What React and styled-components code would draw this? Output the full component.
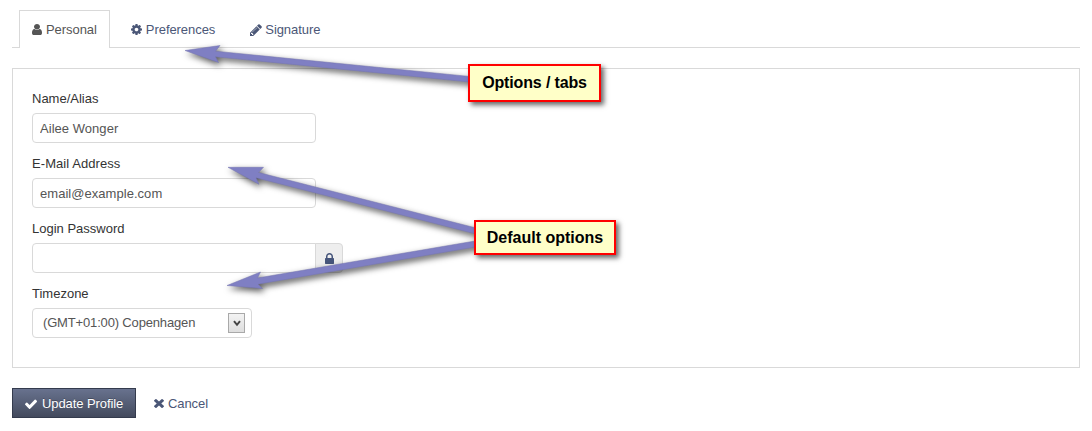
import React from 'react';
import styled, { createGlobalStyle } from 'styled-components';

const Global = createGlobalStyle`
  * { box-sizing: border-box; }
  body {
    margin: 0;
    background: #fff;
    color: #333;
    font: 13px/20px "Liberation Sans", Arial, sans-serif;
  }
  input, button { font: inherit; }
`;

const Page = styled.main`
  position: relative;
  height: 431px;
  padding: 10px 12px 0;
  overflow: hidden;
`;

const Tabs = styled.nav`
  display: flex;
  height: 38px;
  padding-left: 7px;
  border-bottom: 1px solid #d9d9d9;
`;

const Tab = styled.a`
  display: flex;
  align-items: center;
  height: 38px;
  padding: 0 12px;
  margin-right: ${(p) => p.$gap || 0}px;
  border: 1px solid ${(p) => (p.$active ? '#d9d9d9' : 'transparent')};
  border-bottom: 0;
  background: ${(p) => (p.$active ? '#fff' : 'transparent')};
  color: ${(p) => (p.$active ? '#555' : '#4b5777')};
  letter-spacing: -0.06px;
`;

const Glyph = styled.svg`
  flex: none;
  display: block;
  width: ${(p) => p.$w}px;
  height: ${(p) => p.$h}px;
  margin-right: ${(p) => p.$space ?? 4}px;
  fill: currentColor;
`;

const Panel = styled.section`
  height: 300px;
  margin-top: 20px;
  padding: 20px 19px 0;
  border: 1px solid #d9d9d9;
`;

const Field = styled.div`
  height: 65px;
`;

const Label = styled.label`
  display: block;
  height: 24px;
  color: #333;
  letter-spacing: ${(p) => p.$track || 0}px;
`;

const InputRow = styled.div`
  display: flex;
`;

const Input = styled.input`
  display: block;
  width: 284px;
  height: 30px;
  padding: 0 7px;
  border: 1px solid #d9d9d9;
  border-radius: ${(p) => (p.$joined ? '4px 0 0 4px' : '4px')};
  background: #fff;
  color: #555;
  outline: 0;
  letter-spacing: 0.04px;
`;

const AddOn = styled.span`
  display: flex;
  align-items: center;
  justify-content: center;
  width: 28px;
  height: 30px;
  margin-left: -1px;
  border: 1px solid #d9d9d9;
  border-radius: 0 4px 4px 0;
  background: #eee;
  color: #46557b;
`;

const Select = styled.div`
  display: flex;
  align-items: center;
  justify-content: space-between;
  width: 220px;
  height: 30px;
  padding: 0 6px 0 10px;
  border: 1px solid #d9d9d9;
  border-radius: 4px;
  color: #555;
  letter-spacing: -0.16px;
`;

const SelectArrow = styled.span`
  display: flex;
  align-items: center;
  justify-content: center;
  width: 17px;
  height: 20px;
  border: 1px solid #a9a9a9;
  background: linear-gradient(#f3f3f3, #dedede);
`;

const Actions = styled.div`
  display: flex;
  margin-top: 20px;
`;

const Button = styled.button`
  display: flex;
  align-items: center;
  height: 30px;
  padding: 2px 12px 0;
  border: 1px solid ${(p) => (p.$primary ? '#343b4d' : 'transparent')};
  background: ${(p) => (p.$primary ? 'linear-gradient(#68728e, #434a5d)' : 'transparent')};
  color: ${(p) => (p.$primary ? '#fff' : '#4b5777')};
  text-shadow: ${(p) => (p.$primary ? '0 -1px 0 rgba(0,0,0,.25)' : 'none')};
  width: ${(p) => (p.$primary ? '124px' : 'auto')};
  white-space: nowrap;
  letter-spacing: -0.08px;
  margin-right: 5px;
  svg { margin-top: -1px; }
`;

const Arrows = styled.svg`
  position: absolute;
  left: 0;
  top: 0;
  pointer-events: none;
  fill: #7f7fc3;
  stroke: #7575b0;
  stroke-width: 0.5;
  filter: drop-shadow(2px 3px 3px rgba(0, 0, 0, 0.65));
`;

const Callout = styled.div`
  position: absolute;
  left: ${(p) => p.$x}px;
  top: ${(p) => p.$y}px;
  width: ${(p) => p.$w}px;
  height: ${(p) => p.$h}px;
  display: flex;
  align-items: center;
  justify-content: center;
  border: 2px solid #f00;
  background: #ffffc8;
  color: #000;
  font-size: 16px;
  font-weight: 700;
  white-space: nowrap;
  letter-spacing: ${(p) => p.$track || 0}px;
  box-shadow: 3px 3px 5px rgba(0, 0, 0, 0.6);
`;

const icons = {
  user: ['256 128 1280 1536', 'M1536 1399q0 109-62.5 187t-150.5 78h-854q-88 0-150.5-78t-62.5-187q0-85 8.5-160.5t31.5-152 58.5-131 94-89 134.5-34.5q131 128 313 128t313-128q76 0 134.5 34.5t94 89 58.5 131 31.5 152 8.5 160.5zm-256-887q0 159-112.5 271.5t-271.5 112.5-271.5-112.5-112.5-271.5 112.5-271.5 271.5-112.5 271.5 112.5 112.5 271.5z'],
  cog: ['128 128 1536 1536', 'M1152 896q0-106-75-181t-181-75-181 75-75 181 75 181 181 75 181-75 75-181zm512-109v222q0 12-8 23t-20 13l-185 28q-19 54-39 91 35 50 107 138 10 12 10 25t-9 23q-27 37-99 108t-94 71q-12 0-26-9l-138-108q-44 23-91 38-16 136-29 186-7 28-36 28h-222q-14 0-24.5-8.5t-11.5-21.5l-28-184q-49-16-90-37l-141 107q-10 9-25 9-14 0-25-11-126-114-165-168-7-10-7-23 0-12 8-23 15-21 51-66.5t54-70.5q-27-50-41-99l-183-27q-13-2-21-12.5t-8-23.5v-222q0-12 8-23t19-13l186-28q14-46 39-92-40-57-107-138-10-12-10-24 0-10 9-23 26-36 98.5-107.5t94.5-71.5q13 0 26 10l138 107q44-23 91-38 16-136 29-186 7-28 36-28h222q14 0 24.5 8.5t11.5 21.5l28 184q49 16 90 37l142-107q9-9 24-9 13 0 25 10 129 119 165 170 7 8 7 22 0 12-8 23-15 21-51 66.5t-54 70.5q26 50 41 98l183 28q13 2 21 12.5t8 23.5z'],
  pencil: ['128 128 1536 1536', 'M491 1536l91-91-235-235-91 91v107h128v128h107zm523-928q0-22-22-22-10 0-17 7l-542 542q-7 7-7 17 0 22 22 22 10 0 17-7l542-542q7-7 7-17zm-54-192l416 416-832 832h-416v-416zm683 96q0 53-37 90l-166 166-416-416 166-165q36-38 90-38 53 0 91 38l235 234q37 39 37 91z'],
  lock: ['320 128 1152 1408', 'M640 768h512v-192q0-106-75-181t-181-75-181 75-75 181v192zm832 96v576q0 40-28 68t-68 28h-960q-40 0-68-28t-28-68v-576q0-40 28-68t68-28h32v-192q0-184 132-316t316-132 316 132 132 316v192h32q40 0 68 28t28 68z'],
  check: ['121 270 1550 1252', 'M1671 566q0 40-28 68l-724 724-136 136q-28 28-68 28t-68-28l-136-136-362-362q-28-28-28-68t28-68l136-136q28-28 68-28t68 28l294 295 656-657q28-28 68-28t68 28l136 136q28 28 28 68z'],
  times: ['302 366 1188 1188', 'M1490 1322q0 40-28 68l-136 136q-28 28-68 28t-68-28l-294-294-294 294q-28 28-68 28t-68-28l-136-136q-28-28-28-68t28-68l294-294-294-294q-28-28-28-68t28-68l136-136q28-28 68-28t68 28l294 294 294-294q28-28 68-28t68 28l136 136q28 28 28 68t-28 68l-294 294 294 294q28 28 28 68z'],
};

function Icon({ name, width, height, space }) {
  const [box, d] = icons[name];
  return (
    <Glyph $w={width} $h={height} $space={space} viewBox={box} preserveAspectRatio="none" aria-hidden="true">
      <path d={d} />
    </Glyph>
  );
}

export default function App() {
  return (
    <>
      <Global />
      <Page>
        <Tabs>
          <Tab $active $gap={8}><Icon name="user" width={10} height={11} />Personal</Tab>
          <Tab $gap={9}><Icon name="cog" width={11} height={11} space={4} />Preferences</Tab>
          <Tab><Icon name="pencil" width={12} height={12} space={3} />Signature</Tab>
        </Tabs>
        <Panel>
          <Field>
            <Label htmlFor="name">Name/Alias</Label>
            <Input id="name" defaultValue="Ailee Wonger" />
          </Field>
          <Field>
            <Label htmlFor="email" $track={0.07}>E-Mail Address</Label>
            <Input id="email" defaultValue="email@example.com" />
          </Field>
          <Field>
            <Label htmlFor="password">Login Password</Label>
            <InputRow>
              <Input id="password" type="password" $joined />
              <AddOn><Icon name="lock" width={9} height={11} space={0} /></AddOn>
            </InputRow>
          </Field>
          <Field>
            <Label>Timezone</Label>
            <Select>
              (GMT+01:00) Copenhagen
              <SelectArrow>
                <svg width="8" height="7" viewBox="0 0 8 7" fill="none" stroke="#444" strokeWidth="2">
                  <path d="M1 1.2 4 4.8 7 1.2" />
                </svg>
              </SelectArrow>
            </Select>
          </Field>
        </Panel>
        <Actions>
          <Button $primary><Icon name="check" width={12} height={10} space={5} />Update Profile</Button>
          <Button><Icon name="times" width={10} height={9} space={4} />Cancel</Button>
        </Actions>
        <Arrows width="1092" height="431" viewBox="0 0 1092 431">
          <path d="M185 50.5 220 45.5 215.5 51.2 472 76.7V82.3L215.5 56.8 218.5 62.5Z" />
          <path d="M228 167.3 263.5 167.3 258.5 172.5 478 228.5V234.6L256 177.8 259 184.3Z" />
          <path d="M227 285.5 260.5 272 257.5 278 478 240.5V246.6L258 284.2 262.5 288.5Z" />
        </Arrows>
        <Callout $x={468} $y={64} $w={133} $h={38} $track={-0.15}>Options / tabs</Callout>
        <Callout $x={474} $y={220} $w={142} $h={35}>Default options</Callout>
      </Page>
    </>
  );
}
